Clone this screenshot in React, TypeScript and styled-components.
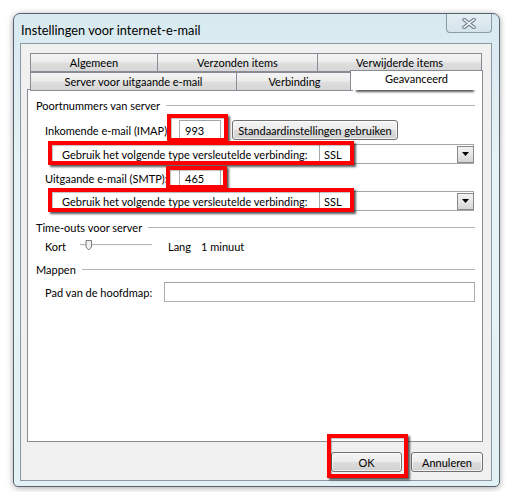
import React from "react";
import styled, { createGlobalStyle } from "styled-components";

const GlobalStyle = createGlobalStyle`
  html, body { margin: 0; padding: 0; background: #ffffff; }
  body {
    font-family: Lato, "Noto Sans", sans-serif;
    font-size: 11px;
    color: #000;
  }
  * { box-sizing: border-box; }
`;

const Page = styled.div`
  position: relative;
  width: 508px;
  height: 492px;
  padding: 13px 0 0 13px;
`;

const Window = styled.div`
  width: 487px;
  height: 474px;
  border: 1px solid #56626d;
  border-radius: 7px 7px 5px 5px;
  background: linear-gradient(180deg, #d8e9f0 0%, #e7f3f7 35%, #e2f1f5 100%);
  box-shadow: 0 1px 6px rgba(0, 0, 0, 0.35);
  display: flex;
  flex-direction: column;
  padding: 0 7px 5px 6px;
`;

const TitleBar = styled.div`
  height: 29px;
  display: flex;
  justify-content: space-between;
  align-items: flex-start;
  flex-shrink: 0;
`;

const Title = styled.span`
  padding: 9px 0 0 1px;
  font-size: 12.8px;
  line-height: 14px;
`;

const CloseButton = styled.div`
  width: 46px;
  height: 19px;
  border: 1px solid #8b9cab;
  border-top: none;
  border-radius: 0 0 4px 4px;
  background: linear-gradient(180deg, #e4eff4 0%, #dce9ef 50%, #d3e3ea 100%);
  display: flex;
  align-items: center;
  justify-content: center;
`;

const Client = styled.div`
  flex: 1;
  background: #f0f0f0;
  border: 1px solid #8b97a2;
  display: flex;
  flex-direction: column;
  padding: 9px 8px 8px 6px;
`;

const TabStrip = styled.div`
  display: flex;
  flex-direction: column;
  margin: 0 0 -1px 3px;
  position: relative;
  z-index: 1;
`;

const TabRow = styled.div<{ $h: number }>`
  display: flex;
  align-items: flex-start;
  height: ${(p) => p.$h}px;
`;

const Tab = styled.div<{ $w: number; $active?: boolean }>`
  width: ${(p) => p.$w}px;
  height: ${(p) => (p.$active ? 20 : 19)}px;
  margin-top: ${(p) => (p.$active ? -2 : 0)}px;
  margin-left: ${(p) => (p.$active ? -3 : -1)}px;
  &:first-child { margin-left: 0; }
  position: relative;
  z-index: ${(p) => (p.$active ? 2 : 1)};
  border: 1px solid #898c95;
  border-bottom: ${(p) => (p.$active ? "none" : "1px solid #898c95")};
  background: ${(p) =>
    p.$active
      ? "#ffffff"
      : "linear-gradient(180deg, #f4f4f4 0%, #ececec 45%, #dedede 55%, #d6d6d6 100%)"};
  display: flex;
  justify-content: center;
  align-items: center;
  padding-bottom: ${(p) => (p.$active ? 4 : 0)}px;
  white-space: nowrap;
`;

const Panel = styled.div`
  height: 353px;
  background: #ffffff;
  border: 1px solid #898c95;
  padding: 7px 7px 0 8px;
  display: flex;
  flex-direction: column;
`;

const GroupHeader = styled.div<{ $top?: number }>`
  display: flex;
  align-items: center;
  height: 16px;
  margin-top: ${(p) => p.$top ?? 0}px;
  gap: 6px;
  white-space: nowrap;
  &::after {
    content: "";
    flex: 1;
    border-top: 1px solid #b4b4b4;
    margin-top: 1px;
  }
`;

const Row = styled.div<{ $top: number; $indent: number; $h?: number }>`
  display: flex;
  align-items: center;
  height: ${(p) => p.$h ?? 20}px;
  margin-top: ${(p) => p.$top}px;
  padding-left: ${(p) => p.$indent}px;
  white-space: nowrap;
`;

const Label = styled.span<{ $w: number; $left?: number }>`
  width: ${(p) => p.$w}px;
  margin-left: ${(p) => p.$left ?? 0}px;
  flex-shrink: 0;
`;

const TextBox = styled.div<{ $w?: number }>`
  ${(p) => (p.$w ? `width: ${p.$w}px;` : "flex: 1;")}
  height: 20px;
  border: 1px solid #abadb3;
  border-top-color: #a0a3aa;
  background: #fff;
  padding-left: 5px;
  display: flex;
  align-items: center;
`;

const PushButton = styled.div<{ $w: number; $left?: number }>`
  width: ${(p) => p.$w}px;
  height: 20px;
  margin-left: ${(p) => p.$left ?? 0}px;
  border: 1px solid #707070;
  border-radius: 3px;
  background: linear-gradient(180deg, #f4f4f4 0%, #ececec 48%, #dddddd 52%, #d0d0d0 100%);
  box-shadow: inset 0 0 0 1px rgba(255, 255, 255, 0.7);
  display: flex;
  align-items: center;
  justify-content: center;
  white-space: nowrap;
`;

const Combo = styled.div`
  width: 155px;
  height: 20px;
  border: 1px solid #a3a6ad;
  background: #fff;
  display: flex;
  align-items: center;
  justify-content: space-between;
  padding: 1px 0 1px 4px;
`;

const ComboArrow = styled.div`
  width: 17px;
  height: 17px;
  border: 1px solid #8a8a8a;
  margin-right: -1px;
  background: linear-gradient(180deg, #f2f2f2 0%, #e6e6e6 50%, #d4d4d4 100%);
  display: flex;
  align-items: center;
  justify-content: center;
`;

const SliderTrack = styled.div`
  position: relative;
  width: 72px;
  height: 2px;
  border-top: 1px solid #b5b5b5;
  border-bottom: 1px solid #f4f4f4;
  margin-top: -3px;
  flex-shrink: 0;
`;

const SliderThumb = styled.svg`
  position: absolute;
  left: 5px;
  top: -5px;
`;

const Footer = styled.div`
  display: flex;
  justify-content: flex-end;
  gap: 9px;
  margin-top: 10px;
`;

const Mark = styled.div`
  position: absolute;
  border: 4px solid #fe0000;
  box-shadow: 2px 2px 2px rgba(0, 0, 0, 0.65), inset 1px 1px 1px rgba(0, 0, 0, 0.25);
  pointer-events: none;
`;

const marks = [
  { l: 354, t: 68, w: 118, h: 22 },
  { l: 167, t: 114, w: 61, h: 28 },
  { l: 48, t: 141, w: 306, h: 24 },
  { l: 166, t: 166, w: 61, h: 23 },
  { l: 48, t: 188, w: 306, h: 24 },
  { l: 327, t: 434, w: 81, h: 44 },
];

const CloseGlyph = () => (
  <svg width="14" height="11" viewBox="0 0 14 11">
    <path d="M2 1.5 L12 9.5 M12 1.5 L2 9.5" stroke="#6f7f8d" strokeWidth="3.6" strokeLinecap="round" />
    <path d="M2 1.5 L12 9.5 M12 1.5 L2 9.5" stroke="#f7fbfc" strokeWidth="1.6" strokeLinecap="round" />
  </svg>
);

const DownArrow = () => (
  <svg width="7" height="4" viewBox="0 0 7 4">
    <path d="M0 0 H7 L3.5 4 Z" fill="#000" />
  </svg>
);

const EncryptionRow = ({ top }: { top: number }) => (
  <Row $top={top} $indent={26}>
    <Label $w={257}>Gebruik het volgende type versleutelde verbinding:</Label>
    <Combo>
      <span>SSL</span>
      <ComboArrow>
        <DownArrow />
      </ComboArrow>
    </Combo>
  </Row>
);

export default function App() {
  return (
    <Page>
      <GlobalStyle />
      <Window>
        <TitleBar>
          <Title>Instellingen voor internet-e-mail</Title>
          <CloseButton>
            <CloseGlyph />
          </CloseButton>
        </TitleBar>
        <Client>
          <TabStrip>
            <TabRow $h={19}>
              <Tab $w={128}>Algemeen</Tab>
              <Tab $w={161}>Verzonden items</Tab>
              <Tab $w={165}>Verwijderde items</Tab>
            </TabRow>
            <TabRow $h={18}>
              <Tab $w={207}>Server voor uitgaande e-mail</Tab>
              <Tab $w={117}>Verbinding</Tab>
              <Tab $w={133} $active>
                Geavanceerd
              </Tab>
            </TabRow>
          </TabStrip>
          <Panel>
            <GroupHeader>Poortnummers van server</GroupHeader>
            <Row $top={7} $indent={9}>
              <Label $w={134}>Inkomende e-mail (IMAP):</Label>
              <TextBox $w={42}>993</TextBox>
              <PushButton $w={166} $left={11}>
                Standaardinstellingen gebruiken
              </PushButton>
            </Row>
            <EncryptionRow top={4} />
            <Row $top={4} $indent={9}>
              <Label $w={134}>Uitgaande e-mail (SMTP):</Label>
              <TextBox $w={42}>465</TextBox>
            </Row>
            <EncryptionRow top={3} />
            <GroupHeader $top={8}>Time-outs voor server</GroupHeader>
            <Row $top={3} $indent={9} $h={16}>
              <Label $w={35}>Kort</Label>
              <SliderTrack>
                <SliderThumb width="8" height="11" viewBox="0 0 8 11">
                  <path d="M1 0.5 H6.5 V7 L3.75 10 L1 7 Z" fill="#f1f1f1" stroke="#7b7b7b" />
                </SliderThumb>
              </SliderTrack>
              <Label $w={33} $left={16}>
                Lang
              </Label>
              <span>1 minuut</span>
            </Row>
            <GroupHeader $top={7}>Mappen</GroupHeader>
            <Row $top={5} $indent={9}>
              <Label $w={119}>Pad van de hoofdmap:</Label>
              <TextBox />
            </Row>
          </Panel>
          <Footer>
            <PushButton $w={71}>OK</PushButton>
            <PushButton $w={72}>Annuleren</PushButton>
          </Footer>
        </Client>
      </Window>
      {marks.map((m, i) => (
        <Mark key={i} style={{ left: m.l, top: m.t, width: m.w, height: m.h }} />
      ))}
    </Page>
  );
}
